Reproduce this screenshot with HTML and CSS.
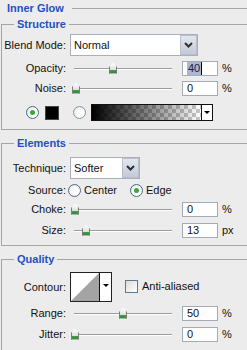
FILE: index.html
```html
<!DOCTYPE html>
<html lang="en">
<head>
<meta charset="UTF-8" />
<title>Inner Glow</title>
<link rel="stylesheet" href="styles.css">
</head>
<body>
<div class="panel">
  <div class="title"><span>Inner Glow</span></div>

  <fieldset class="group structure">
    <legend>Structure</legend>
    <div class="row h22">
      <label class="lbl">Blend Mode:</label>
      <div class="select blend">
        <span class="val">Normal</span>
        <span class="btn"><svg width="9" height="6" viewBox="0 0 9 6"><path d="M1 1 L4.5 4.5 L8 1" fill="none" stroke="#2b2f38" stroke-width="2"/></svg></span>
      </div>
    </div>
    <div class="row h24">
      <label class="lbl">Opacity:</label>
      <div class="slider"><span class="thumb" style="left:39px"></span></div>
      <div class="num"><span class="sel">40</span></div>
      <span class="unit">%</span>
    </div>
    <div class="row h16">
      <label class="lbl">Noise:</label>
      <div class="slider"><span class="thumb" style="left:2px"></span></div>
      <div class="num">0</div>
      <span class="unit">%</span>
    </div>
    <div class="row colors">
      <span class="radio on"></span>
      <span class="swatch"></span>
      <span class="radio second"></span>
      <div class="gradient">
        <span class="ramp"></span>
        <span class="drop"><i class="tri"></i></span>
      </div>
    </div>
  </fieldset>

  <fieldset class="group elements">
    <legend>Elements</legend>
    <div class="row h22">
      <label class="lbl">Technique:</label>
      <div class="select tech">
        <span class="val">Softer</span>
        <span class="btn"><svg width="9" height="6" viewBox="0 0 9 6"><path d="M1 1 L4.5 4.5 L8 1" fill="none" stroke="#2b2f38" stroke-width="2"/></svg></span>
      </div>
    </div>
    <div class="row h22">
      <label class="lbl tight">Source:</label>
      <span class="opt first"><span class="radio"></span>Center</span>
      <span class="opt"><span class="radio on"></span>Edge</span>
    </div>
    <div class="row h16">
      <label class="lbl">Choke:</label>
      <div class="slider"><span class="thumb" style="left:1px"></span></div>
      <div class="num">0</div>
      <span class="unit">%</span>
    </div>
    <div class="row h26">
      <label class="lbl">Size:</label>
      <div class="slider"><span class="thumb" style="left:12px"></span></div>
      <div class="num">13</div>
      <span class="unit">px</span>
    </div>
  </fieldset>

  <fieldset class="group quality">
    <legend>Quality</legend>
    <div class="row h30">
      <label class="lbl">Contour:</label>
      <div class="contour">
        <span class="curve"><svg width="28" height="28" viewBox="0 0 28 28"><polygon points="0,28 28,0 28,28" fill="#a4a4a4"/></svg></span>
        <span class="drop"><i class="tri"></i></span>
      </div>
      <span class="check"></span>
      <span class="check-text">Anti-aliased</span>
    </div>
    <div class="row h22">
      <label class="lbl">Range:</label>
      <div class="slider"><span class="thumb" style="left:49px"></span></div>
      <div class="num">50</div>
      <span class="unit">%</span>
    </div>
    <div class="row h20">
      <label class="lbl">Jitter:</label>
      <div class="slider"><span class="thumb" style="left:1px"></span></div>
      <div class="num">0</div>
      <span class="unit">%</span>
    </div>
  </fieldset>
</div>
</body>
</html>
```

FILE: styles.css
```css
* {
  box-sizing: border-box;
}
html, body {
  margin: 0;
}
body {
  width: 247px;
  height: 350px;
  overflow: hidden;
  background: #ececec;
  font-family: "Liberation Sans", Arial, sans-serif;
  font-size: 11px;
  color: #111;
}

.panel {
  padding-left: 1px;
}

.title {
  display: flex;
  align-items: center;
  height: 16px;
  margin-bottom: 2px;
  padding-left: 6px;
  color: #2151c4;
  font-weight: bold;
}
.title::after {
  content: "";
  flex: 1;
  margin-left: 8px;
  border-top: 1px solid #a5a5a5;
}

/* group boxes, right edge falls just outside the panel */
.group {
  width: 247px;
  min-width: 0;
  margin: 0 0 7px;
  padding: 0;
  border: 1px solid #a5a5a5;
}
.group legend {
  margin-left: 12px;
  padding: 0 3px;
  line-height: 13px;
  font-weight: bold;
  color: #2151c4;
}
.structure { padding-top: 3px; }
.elements { padding-top: 7px; padding-bottom: 2px; }
.quality {
  height: 97px;
  margin-bottom: 0;
  padding-top: 6px;
  border-bottom: none;
}

.row {
  display: flex;
  align-items: center;
}
.h16 { height: 16px; }
.h20 { height: 20px; }
.h22 { height: 22px; }
.h24 { height: 24px; }
.h26 { height: 26px; }
.h30 { height: 30px; }

.lbl {
  flex: none;
  width: 64px;
  margin-right: 4px;
  text-align: right;
}
.lbl.tight {
  margin-right: 2px;
}

/* combo boxes */
.select {
  display: flex;
  align-items: stretch;
  height: 22px;
  background: #fff;
  border: 1px solid #a9b0bb;
}
.select .val {
  flex: 1;
  padding-left: 3px;
  display: flex;
  align-items: center;
}
.select .btn {
  width: 17px;
  display: flex;
  align-items: center;
  justify-content: center;
  background: linear-gradient(#e2e6ee, #c4cad6);
  border: 1px solid #b9c0cc;
}
.blend { width: 128px; }
.tech { width: 70px; }

/* sliders */
.slider {
  position: relative;
  flex: none;
  width: 108px;
  height: 11px;
}
.slider::before {
  content: "";
  position: absolute;
  left: 4px;
  right: 6px;
  top: 5px;
  border-top: 1px solid #9c9c9c;
  border-bottom: 1px solid #fff;
}
.thumb {
  position: absolute;
  top: 0;
  width: 8px;
  height: 11px;
  background:
    linear-gradient(#3f9f46, #2f8a37) 0 100% / 100% 3px no-repeat,
    linear-gradient(#fdfdfd, #cfd3cf);
  border: 1px solid #7b7f7b;
  border-top: none;
  clip-path: polygon(50% 0, 100% 40%, 100% 100%, 0 100%, 0 40%);
}

.num {
  flex: none;
  width: 36px;
  height: 15px;
  margin-left: 4px;
  padding-left: 4px;
  line-height: 13px;
  background: #fff;
  border: 1px solid #a3abb7;
}
.num .sel {
  display: inline-block;
  background: #aab6d2;
  color: #1c2233;
  padding: 0 1px;
  border-right: 1px solid #000;
}
.unit {
  margin-left: 4px;
}

/* colour row */
.colors {
  height: 33px;
  padding-left: 24px;
}
.radio {
  flex: none;
  position: relative;
  width: 13px;
  height: 13px;
  border-radius: 50%;
  border: 1px solid #4d6b8f;
  background: radial-gradient(circle at 60% 60%, #fff 30%, #dcdcd6 100%);
}
.radio.on::after {
  content: "";
  position: absolute;
  left: 3px;
  top: 3px;
  width: 5px;
  height: 5px;
  border-radius: 50%;
  background: #3aa83a;
}
.radio.second {
  border-color: #7f93ab;
}
.swatch {
  flex: none;
  width: 14px;
  height: 14px;
  margin: 0 14px 0 6px;
  background: #000;
  border: 1px solid #444;
}
.gradient {
  display: flex;
  width: 122px;
  height: 17px;
  margin-left: 5px;
  border: 1px solid #111;
}
.gradient .ramp {
  flex: 1;
  background:
    linear-gradient(to right, #000, rgba(0, 0, 0, 0)),
    repeating-conic-gradient(#c8c8c8 0 25%, #fff 0 50%) 0 0 / 8px 8px;
}
.drop {
  width: 11px;
  display: flex;
  align-items: center;
  justify-content: center;
  background: #fff;
  border-left: 1px solid #111;
}
.tri {
  width: 0;
  height: 0;
  border-left: 3px solid transparent;
  border-right: 3px solid transparent;
  border-top: 3px solid #000;
}

/* source options */
.opt {
  display: flex;
  align-items: center;
  gap: 3px;
}
.opt.first {
  width: 62px;
}

/* contour */
.contour {
  display: flex;
  width: 42px;
  height: 30px;
  border: 1px solid #222;
  background: #fff;
}
.contour .curve {
  width: 28px;
  display: flex;
}
.contour .drop {
  flex: 1;
  align-items: flex-start;
  padding-top: 11px;
}
.check {
  flex: none;
  width: 13px;
  height: 13px;
  margin-left: 13px;
  margin-top: -2px;
  border: 1px solid #5f7894;
  background: linear-gradient(135deg, #dcdcd7, #fff);
}
.check-text {
  margin-left: 4px;
  margin-top: -2px;
}
```
